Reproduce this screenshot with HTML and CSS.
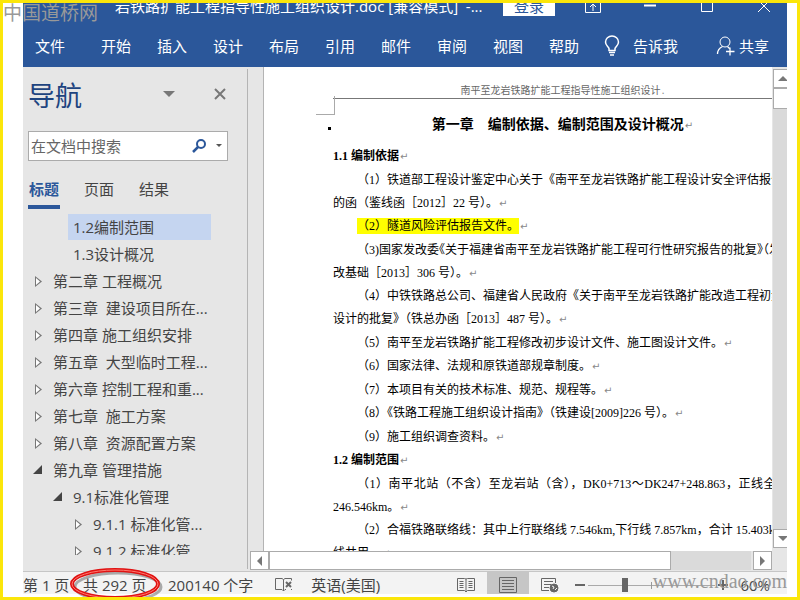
FILE: index.html
```html
<!DOCTYPE html>
<html lang="zh-CN">
<head>
    <meta charset="UTF-8">
    <meta name="viewport" content="width=device-width, initial-scale=1.0">
    <title>铁路扩能工程指导性施工组织设计.doc</title>
    <link rel="stylesheet" href="styles.css">
</head>
<body>
    <div class="app">
        <header class="ribbon">
            <div class="titlebar">
                <span class="doc-name">岩铁路扩能工程指导性施工组织设计.doc [兼容模式]&nbsp; -...</span>
                <button class="login">登录</button>
                <div class="window-buttons">
                    <button aria-label="功能区显示选项"><svg width="16" height="16" viewBox="0 0 16 16"><path d="M.5 .5h15v14H.5zM.5 4.500h15M8 13V6M5 9l3-3 3 3"/></svg></button>
                    <button aria-label="最小化"><svg width="16" height="16" viewBox="0 0 16 16"><path d="M2 7.500h12" stroke-width="2"/></svg></button>
                    <button aria-label="最大化"><svg width="16" height="16" viewBox="0 0 16 16"><path d="M2.500 2.500h11v11h-11z"/></svg></button>
                    <button aria-label="关闭"><svg width="16" height="16" viewBox="0 0 16 16"><path d="M2 2l12 12M14 2L2 14"/></svg></button>
                </div>
            </div>
            <nav class="menu">
                <button class="file">文件</button>
                <button>开始</button>
                <button>插入</button>
                <button>设计</button>
                <button>布局</button>
                <button>引用</button>
                <button>邮件</button>
                <button>审阅</button>
                <button>视图</button>
                <button>帮助</button>
                <button class="tell-me">
                    <svg width="16" height="22" viewBox="0 0 16 22"><path d="M5 15.500v-2C4.500 11.500 1.500 10.500 1.500 7a6.500 6 0 0 1 13 0c0 3.500-3 4.500-3.500 6.500v2zM5 17.500h6M6 20h4" stroke-width="1.500"/></svg>
                    告诉我
                </button>
                <button class="share">
                    <svg width="19" height="20" viewBox="0 0 19 20"><circle cx="9" cy="6" r="5"/><path d="M1.500 18c0-4 2-6 5-7.500M11.500 10.500l2 2M14 11.500v8M10 15.500h8.500" stroke-width="1.300"/></svg>
                    共享
                </button>
            </nav>
        </header>

        <main class="workspace">
            <aside class="nav-pane">
                <div class="pane-head">
                    <h2>导航</h2>
                    <button aria-label="任务窗格选项"><svg width="12" height="6"><path d="M0 0h12L6 6z" fill="#777"/></svg></button>
                    <button aria-label="关闭窗格"><svg width="12" height="12"><path d="M1 1l10 10M11 1L1 11" stroke="#777" stroke-width="2"/></svg></button>
                </div>
                <div class="search">
                    <input type="text" placeholder="在文档中搜索" aria-label="在文档中搜索">
                    <button aria-label="搜索"><svg width="15" height="14"><circle cx="9" cy="5" r="4" fill="none" stroke="#2b579a" stroke-width="2"/><path d="M6 8l-5 5" stroke="#2b579a" stroke-width="2.500"/></svg></button>
                    <button aria-label="搜索选项"><svg width="6" height="4"><path d="M0 0h6L3 3z" fill="#555"/></svg></button>
                </div>
                <div class="pane-tabs">
                    <button class="active">标题</button>
                    <button>页面</button>
                    <button>结果</button>
                </div>
                <ul class="outline">
                    <li class="level-2 selected"><a href="#s12">1.2编制范围</a></li>
                    <li class="level-2"><a href="#s13">1.3设计概况</a></li>
                    <li class="level-1 closed"><a href="#c2">第二章 工程概况</a></li>
                    <li class="level-1 closed"><a href="#c3">第三章&nbsp; 建设项目所在...</a></li>
                    <li class="level-1 closed"><a href="#c4">第四章 施工组织安排</a></li>
                    <li class="level-1 closed"><a href="#c5">第五章&nbsp; 大型临时工程...</a></li>
                    <li class="level-1 closed"><a href="#c6">第六章 控制工程和重...</a></li>
                    <li class="level-1 closed"><a href="#c7">第七章&nbsp; 施工方案</a></li>
                    <li class="level-1 closed"><a href="#c8">第八章&nbsp; 资源配置方案</a></li>
                    <li class="level-1 open"><a href="#c9">第九章 管理措施</a></li>
                    <li class="level-2 open"><a href="#s91">9.1标准化管理</a></li>
                    <li class="level-3 closed"><a href="#s911">9.1.1 标准化管...</a></li>
                    <li class="level-3 closed"><a href="#s912">9.1.2 标准化管...</a></li>
                </ul>
            </aside>

            <section class="editor">
                <div class="view">
                    <div class="page-area">
                        <article class="page">
                            <div class="page-header">南平至龙岩铁路扩能工程指导性施工组织设计<i>.</i></div>
                            <h1>第一章　编制依据、编制范围及设计概况<i>↵</i></h1>
                            <div class="text">
                                <h3>1.1 编制依据<i>↵</i></h3>
                                <p>（1）铁道部工程设计鉴定中心关于《南平至龙岩铁路扩能工程设计安全评估报告》<br>的函（鉴线函［2012］22 号）。<i>↵</i></p>
                                <p><mark>（2）隧道风险评估报告文件。</mark><i>↵</i></p>
                                <p>（3)国家发改委<span class="half">《</span>关于福建省南平至龙岩铁路扩能工程可行性研究报告的批复<span class="half">》（</span>发<br>改基础［2013］306 号）。<i>↵</i></p>
                                <p>（4）中铁铁路总公司、福建省人民政府《关于南平至龙岩铁路扩能改造工程初步<br>设计的批复》（铁总办函［2013］487 号）。<i>↵</i></p>
                                <p>（5）南平至龙岩铁路扩能工程修改初步设计文件、施工图设计文件。<i>↵</i></p>
                                <p>（6）国家法律、法规和原铁道部规章制度。<i>↵</i></p>
                                <p>（7）本项目有关的技术标准、规范、规程等。<i>↵</i></p>
                                <p>（8）《铁路工程施工组织设计指南》（铁建设[2009]226 号）。<i>↵</i></p>
                                <p>（9）施工组织调查资料。<i>↵</i></p>
                                <h3 id="s12">1.2 编制范围<i>↵</i></h3>
                                <p><span class="full">（1）南平北站（不含）至龙岩站（含），DK0+713～DK247+248.863，正线全长</span>246.546km。<i>↵</i></p>
                                <p><span class="full">（2）合福铁路联络线：其中上行联络线 7.546km,下行线 7.857km，合计 15.403km，</span>线共用。<i>↵</i></p>
                            </div>
                        </article>
                    </div>
                    <div class="scroll-v">
                        <button aria-label="向上滚动"><svg width="10" height="5"><path d="M0 5h10L5 0z"/></svg></button>
                        <div class="thumb"></div>
                        <div class="track"></div>
                        <button aria-label="向下滚动"><svg width="10" height="5"><path d="M0 0h10L5 5z"/></svg></button>
                    </div>
                </div>
                <div class="scroll-h">
                    <button aria-label="向左滚动"><svg width="5" height="10"><path d="M5 0v10L0 5z"/></svg></button>
                    <div class="thumb"></div>
                    <div class="track"></div>
                    <button aria-label="向右滚动"><svg width="5" height="10"><path d="M0 0v10L5 5z"/></svg></button>
                </div>
            </section>
        </main>

        <footer class="status">
            <span class="page-no">第 1 页</span>
            <span class="page-count">共 292 页
                <svg class="ring" width="96" height="36" viewBox="0 0 96 36">
                    <ellipse cx="49" cy="19" rx="43" ry="14" stroke="#000" stroke-opacity=".3" stroke-width="3"/>
                    <ellipse cx="46" cy="16" rx="43" ry="14" stroke="#e01212" stroke-width="4"/>
                    <ellipse cx="46" cy="16" rx="43" ry="14" stroke="#ff7a70" stroke-width="1"/>
                </svg>
            </span>
            <span class="words">200140 个字</span>
            <button class="proof" aria-label="校对"><svg width="18" height="16" viewBox="0 0 18 16"><path d="M8.500 14V2.500L7 1.500H.5v11H7l1.500 1.500L10 12.500h1M8.500 2.500l1.500-1h6.500v2M16.500 12v1"/><path d="M11 5l5 5M16 5l-5 5" stroke-width="2"/></svg></button>
            <button class="lang">英语(美国)</button>
            <div class="views">
                <button aria-label="阅读视图"><svg width="18" height="16" viewBox="0 0 18 16"><path d="M9 2v13M9 2L7.500 1.500h-7v12h7L9 15l1.500-1.500h7v-12h-7zM2.500 4.500h4M2.500 6.500h4M2.500 8.500h4M2.500 10.500h4M11.500 4.500h4M11.500 6.500h4M11.500 8.500h4M11.500 10.500h4"/></svg></button>
                <button class="current" aria-label="页面视图"><svg width="18" height="16" viewBox="0 0 18 16"><path d="M.5 .5h17v15H.5zM3 3.500h12M3 6.500h12M3 9.500h12M3 12.500h12"/></svg></button>
                <button aria-label="Web 版式视图"><svg width="18" height="16" viewBox="0 0 18 16"><path d="M8 13.500H.5v-12h14V6M3 4.500h9M3 7.500h7M3 10.500h5"/><circle cx="13" cy="11" r="4" fill="#666"/><path d="M11 9l2 1-1 2M14 13l2-2" stroke="#f3f3f3"/></svg></button>
            </div>
            <div class="zoom">
                <button aria-label="缩小"><svg width="10" height="10"><path d="M0 5h10" stroke-width="2"/></svg></button>
                <input type="range" min="0" max="100" value="28" aria-label="缩放">
                <button aria-label="放大"><svg width="10" height="10"><path d="M0 5h10M5 0v10" stroke-width="2"/></svg></button>
                <span class="percent">60%</span>
            </div>
        </footer>
    </div>

    <div class="watermark site-name">中国道桥网</div>
    <div class="watermark site-url">www.cndao.com</div>
</body>
</html>
```
FILE: styles.css
```css
* {
    box-sizing: border-box;
}

body {
    margin: 0;
    height: 100vh;
    position: relative;
    padding: 0 10px 3px 20px;
    border: 3px solid #fbe60a;
    background: #fff;
    font-family: "Open Sans", "Noto Sans CJK SC", sans-serif;
    font-size: 15px;
    line-height: 20px;
    color: #444;
    overflow: hidden;
}

button {
    display: flex;
    align-items: center;
    justify-content: center;
    padding: 0;
    border: 0;
    background: none;
    font: inherit;
    color: inherit;
    flex: none;
    white-space: nowrap;
}

svg {
    display: block;
    flex: none;
}

.app {
    height: 100%;
    display: flex;
    flex-direction: column;
}

/* Ribbon */
.ribbon {
    flex: none;
    background: #2b579a;
    color: #fff;
    overflow: hidden;
}

.ribbon svg {
    fill: none;
    stroke: #fff;
}

.titlebar {
    display: flex;
    align-items: center;
    height: 26px;
    margin-top: -10px;
    padding: 0 15px 0 92px;
}

.doc-name {
    width: 388px;
    white-space: nowrap;
}

.login {
    width: 52px;
    height: 20px;
    background: #fff;
    color: #2b579a;
}

.window-buttons {
    flex: 1;
    display: flex;
    justify-content: space-between;
    padding-left: 30px;
}

.menu {
    display: flex;
    height: 48px;
    padding: 6px 18px 0 0;
}

.menu button {
    width: 56px;
}

.menu .file {
    width: 65px;
    padding-right: 11px;
}

.menu .tell-me,
.menu .share {
    width: auto;
    gap: 13px;
    padding-left: 12px;
}

.menu .share {
    margin-left: auto;
    gap: 4px;
}

/* Navigation pane */
.workspace {
    flex: 1;
    min-height: 0;
    display: flex;
    background: #e6e6e6;
}

.nav-pane {
    flex: none;
    width: 225px;
    margin: 2px 0;
    padding-left: 5px;
    border-right: 1px solid #b4b4b4;
    display: flex;
    flex-direction: column;
}

.pane-head {
    display: flex;
    align-items: center;
    height: 54px;
    padding-right: 21px;
}

.pane-head h2 {
    flex: 1;
    margin: 0;
    font-size: 27px;
    line-height: 40px;
    font-weight: 400;
    color: #1e4480;
}

.pane-head button {
    margin-left: 39px;
}

.pane-head button svg {
    margin-top: -4px;
}

.search {
    display: flex;
    align-items: center;
    height: 30px;
    width: 200px;
    margin-top: 8px;
    padding: 0 5px 0 2px;
    gap: 9px;
    background: #fff;
    border: 1px solid #ababab;
}

.search input {
    flex: 1;
    min-width: 0;
    padding: 0;
    border: 0;
    background: none;
    font: inherit;
}

.search input::placeholder {
    color: #666;
}

.pane-tabs {
    display: flex;
    gap: 23px;
    margin-top: 16px;
}

.pane-tabs button {
    width: 32px;
    height: 32px;
    padding-bottom: 4px;
    border-bottom: 4px solid transparent;
}

.pane-tabs .active {
    font-weight: 700;
    color: #2b579a;
    border-color: #2b579a;
}

.outline {
    flex: 1;
    min-height: 0;
    margin: 5px 0 14px;
    padding: 0;
    list-style: none;
    overflow: hidden;
}

.outline li {
    position: relative;
    height: 27px;
    padding-left: 40px;
}

.outline a {
    display: block;
    width: 143px;
    height: 26px;
    padding-left: 5px;
    line-height: 26px;
    color: #444;
    text-decoration: none;
    white-space: nowrap;
}

.outline .level-1 {
    padding-left: 20px;
}

.outline .level-3 {
    padding-left: 60px;
}

.outline .selected a {
    background: #c5d5f0;
}

.outline .closed::before,
.outline .open::before {
    content: "";
    position: absolute;
    top: 8px;
    margin-left: -13px;
    width: 7px;
    height: 11px;
    background: #777;
    clip-path: polygon(0 0, 100% 50%, 0 100%);
}

.outline .closed::after {
    content: "";
    position: absolute;
    top: 10px;
    left: 0;
    margin-left: 8px;
    width: 4px;
    height: 7px;
    background: #fff;
    clip-path: polygon(0 0, 100% 50%, 0 100%);
}

.outline .level-3.closed::after {
    margin-left: 48px;
}

.outline .open::before {
    margin-left: -15px;
    width: 9px;
    height: 9px;
    background: #444;
    clip-path: polygon(100% 0, 100% 100%, 0 100%);
}

/* Document */
.editor {
    flex: 1;
    min-width: 0;
    display: flex;
    flex-direction: column;
}

.view {
    flex: 1;
    min-height: 0;
    display: flex;
}

.page-area {
    flex: 1;
    min-width: 0;
    margin-left: 15px;
    border-left: 1px solid #b4b4b4;
    background: #fff;
    overflow: hidden;
}

.page {
    margin-right: -20px;
    padding: 14px 0 0 69px;
    font-family: "Liberation Serif", "Noto Sans CJK SC", serif;
    font-size: 12px;
    line-height: 23px;
    color: #000;
    white-space: nowrap;
}

.page i {
    margin-left: 1px;
    font: 10px "DejaVu Sans", sans-serif;
    color: #888;
}

.page-header {
    position: relative;
    height: 18px;
    border-bottom: 1px solid #777;
    font-size: 10px;
    line-height: 20px;
    text-align: center;
    color: #666;
}

/* margin corner mark */
.page-header::before {
    content: "";
    position: absolute;
    left: -17px;
    top: 15px;
    width: 18px;
    height: 18px;
    border: solid #aaa;
    border-width: 0 1px 1px 0;
}

.page h1 {
    position: relative;
    margin: 14px 0 8px;
    font-size: 14px;
    line-height: 24px;
    text-align: center;
}

/* outline level dot */
.page h1::before {
    content: "";
    position: absolute;
    left: -5px;
    top: 14px;
    width: 3px;
    height: 3px;
    background: #000;
}

.text {
    margin-right: 4px;
}

.text h3,
.text p {
    margin: 0;
    font-size: 12px;
}

.text p {
    text-indent: 24px;
}

.text > :nth-child(odd) {
    margin-bottom: 1px;
}

.text mark {
    padding: 1px 0;
    background: #ff0;
    color: #000;
}

.half {
    font-feature-settings: "halt";
}

.full {
    display: block;
    text-align-last: justify;
}

/* Scrollbars */
.scroll-v {
    flex: none;
    width: 15px;
    padding: 2px 0 3px 1px;
    display: flex;
    flex-direction: column;
    overflow: hidden;
}

.scroll-v button,
.scroll-h button {
    width: 19px;
    height: 19px;
    background: #fff;
    border: 1px solid #ababab;
}

.scroll-v svg,
.scroll-h svg {
    fill: #777;
}

.scroll-v .thumb {
    width: 19px;
    height: 21px;
}

.thumb {
    flex: none;
    background: #fff;
    border: 1px solid #ababab;
}

.track {
    flex: 1;
    background: #dadada;
}

.scroll-h {
    flex: none;
    display: flex;
    height: 20px;
    padding: 0 15px 1px 2px;
}

.scroll-h .thumb {
    width: 77%;
}

.scroll-h .track {
    margin-right: 2px;
}

/* Status bar */
.status {
    flex: none;
    position: relative;
    display: flex;
    align-items: center;
    height: 23px;
    padding-top: 4px;
    background: #f3f3f3;
    border-top: 1px solid #c6c6c6;
    white-space: nowrap;
}

.status svg {
    fill: none;
    stroke: #666;
}

.page-no {
    width: 60px;
}

.page-count {
    position: relative;
    width: 85px;
}

.status .ring {
    position: absolute;
    left: -14px;
    top: -7px;
}

.proof {
    margin-left: 22px;
}

.lang {
    margin-left: 18px;
}

.views {
    display: flex;
    align-self: stretch;
    margin: -4px 0 0 auto;
}

.views button {
    width: 42px;
    padding-top: 3px;
}

.views .current {
    background: #c6c6c6;
}

.zoom {
    display: flex;
    align-items: center;
    gap: 3px;
    padding: 0 17px 0 4px;
}

.zoom input {
    width: 127px;
    height: 14px;
    margin: 0;
    appearance: none;
    background: linear-gradient(#999, #999) center / 1px 7px no-repeat,
                linear-gradient(#aaa, #aaa) center / 100% 1px no-repeat;
}

.zoom input::-webkit-slider-thumb {
    appearance: none;
    width: 6px;
    height: 14px;
    background: #666;
}

.percent {
    margin-left: 9px;
}

/* Overlaid site marks */
.watermark {
    position: absolute;
    color: #999;
    white-space: nowrap;
    pointer-events: none;
}

.site-name {
    left: 0;
    top: -3px;
    font-size: 19px;
    line-height: 26px;
}

.site-url {
    right: 10px;
    bottom: 2px;
    font-family: "Liberation Serif", serif;
    font-size: 20px;
    line-height: 28px;
}
```
